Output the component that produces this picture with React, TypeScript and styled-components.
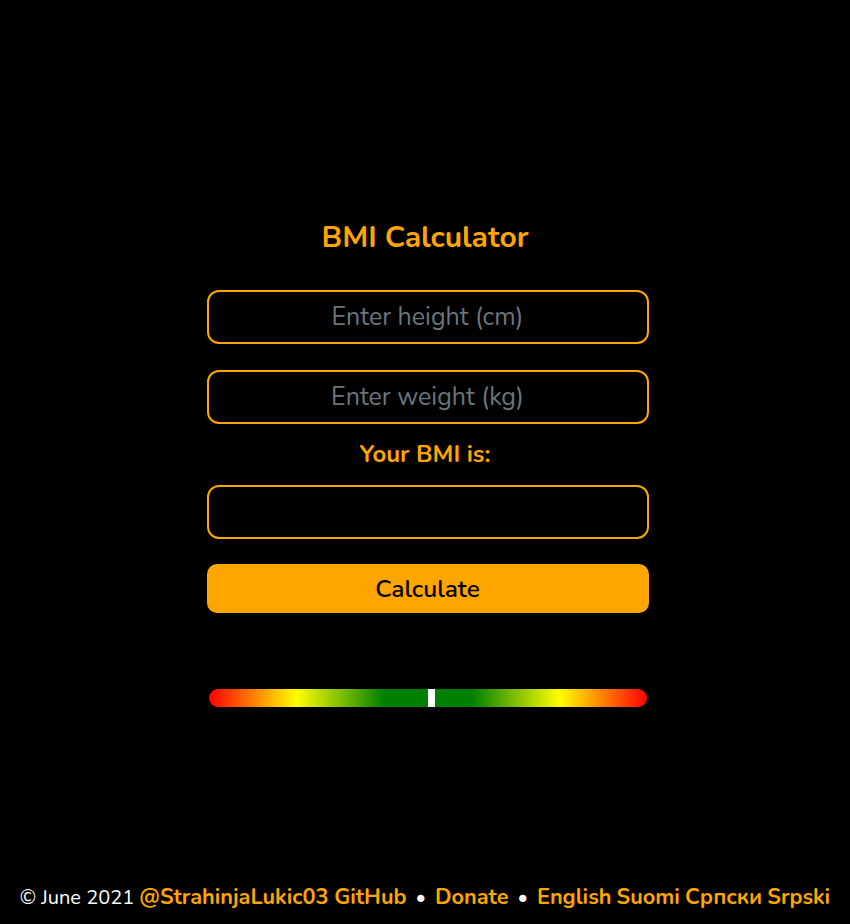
import React from "react";
import styled, { createGlobalStyle } from "styled-components";

const Global = createGlobalStyle`
  html, body { margin: 0; padding: 0; background: #000; }
  body { font-family: "Nunito", Lato, "Noto Sans", sans-serif; color: #fff; }
  * { box-sizing: border-box; }
`;

const Page = styled.div`
  min-height: 924px;
  display: flex;
  flex-direction: column;
  align-items: center;
`;

const Main = styled.main`
  flex: 1;
  width: 442px;
  margin-left: 5px;
  padding-top: 218px;
  display: flex;
  flex-direction: column;
  align-items: stretch;
`;

const Title = styled.h1`
  margin: 0 0 32px -5px;
  text-align: center;
  color: #ffa500;
  font-size: 30px;
  font-weight: 700;
  line-height: 40px;
`;

const Field = styled.input<{ $gap?: number }>`
  height: 54px;
  width: 100%;
  border: 2px solid #ffa500;
  border-radius: 12px;
  background: #000;
  color: #fff;
  font-family: inherit;
  font-size: 25px;
  text-align: center;
  outline: none;
  margin-bottom: ${(p) => p.$gap ?? 0}px;
  &::placeholder { color: #6c757d; }
`;

const Label = styled.div`
  text-align: center;
  color: #ffa500;
  font-size: 24px;
  font-weight: 700;
  line-height: 30px;
  margin: 15px 0 16px -5px;
`;

const Button = styled.button`
  margin-top: 25px;
  height: 49px;
  border: none;
  border-radius: 10px;
  background: #ffa500;
  color: #000;
  font-family: inherit;
  font-size: 24.5px;
  font-weight: 600;
  cursor: pointer;
`;

const Scale = styled.div`
  position: relative;
  margin: 76px 2px 0;
  height: 18px;
  border-radius: 9px;
  background: linear-gradient(to right, #ff0000 0%, #ffff00 20%, #008000 40%, #008000 60%, #ffff00 80%, #ff0000 100%);
`;

const Marker = styled.div`
  position: absolute;
  top: 0;
  width: 7px;
  height: 18px;
  background: #fff;
`;

const Footer = styled.footer`
  padding-bottom: 12px;
  font-size: 20px;
  line-height: 28px;
  text-align: center;
  color: #fff;
`;

const Link = styled.a`
  color: #ffa500;
  font-size: 21.7px;
  font-weight: 700;
  text-decoration: none;
`;

const Dot = styled.span`
  margin: 0 9px;
`;

export default function App() {
  return (
    <Page>
      <Global />
      <Main>
        <Title>BMI Calculator</Title>
        <Field placeholder="Enter height (cm)" $gap={26} />
        <Field placeholder="Enter weight (kg)" />
        <Label>Your BMI is:</Label>
        <Field readOnly />
        <Button>Calculate</Button>
        <Scale>
          <Marker style={{ left: "219px" }} />
        </Scale>
      </Main>
      <Footer>
        © June 2021 <Link href="#">@StrahinjaLukic03 GitHub</Link>
        <Dot>•</Dot>
        <Link href="#">Donate</Link>
        <Dot>•</Dot>
        <Link href="#">English</Link> <Link href="#">Suomi</Link> <Link href="#">Српски</Link> <Link href="#">Srpski</Link>
      </Footer>
    </Page>
  );
}
